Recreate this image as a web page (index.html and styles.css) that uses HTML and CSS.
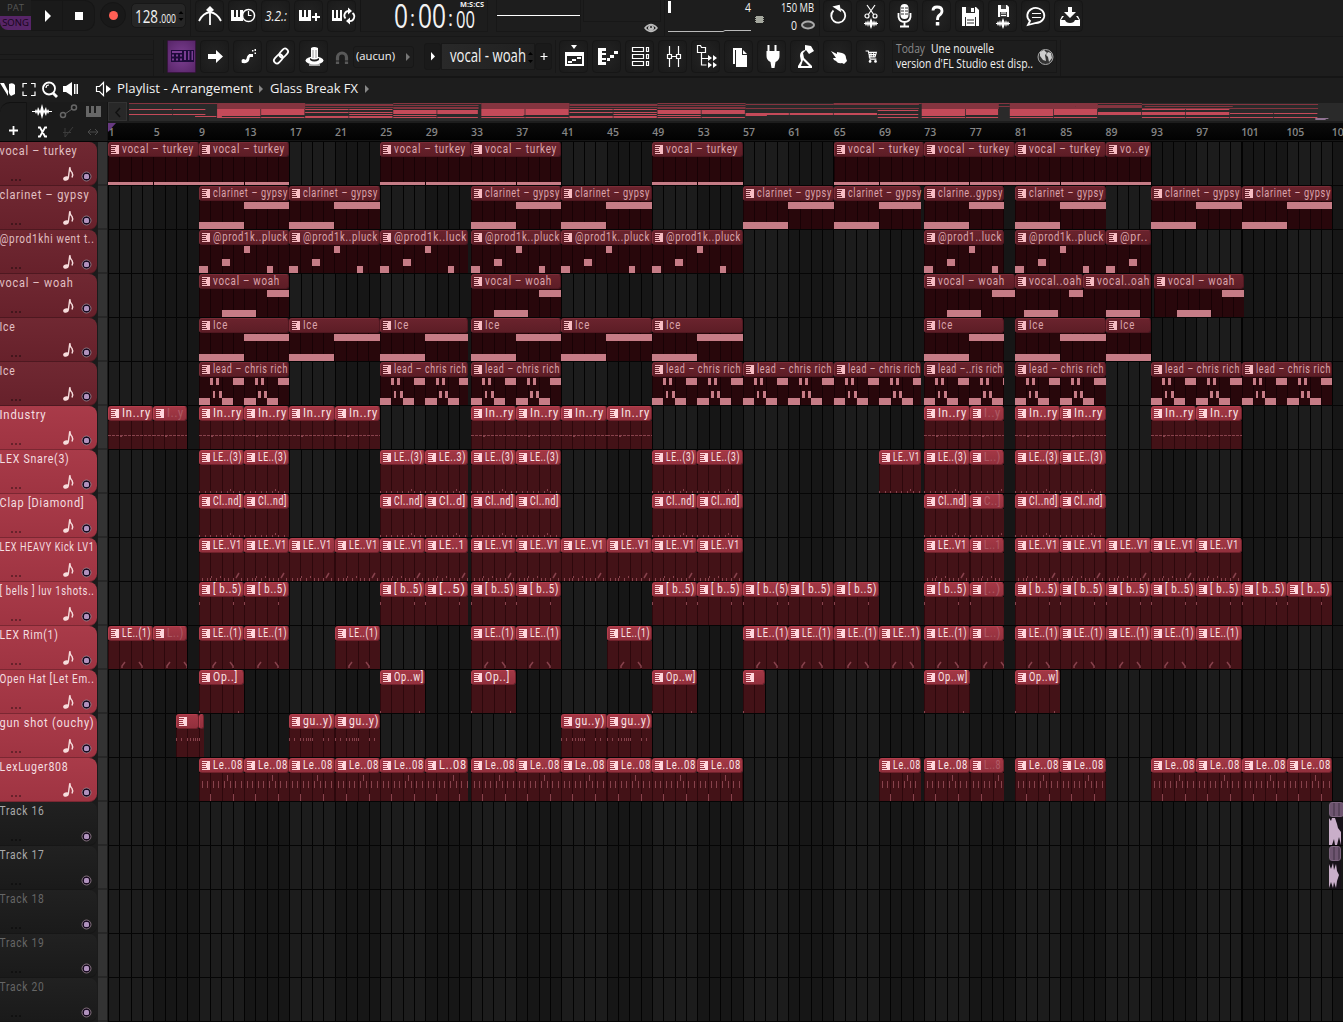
FILE: index.html
```html
<!DOCTYPE html>
<html lang="fr">
<head>
<meta charset="utf-8">
<title>FL Studio - Playlist</title>
<link rel="stylesheet" href="styles.css">
</head>
<body>
<div class="app">
  <header class="bar bar-main">
    <div class="mode"><span>PAT</span><span class="on">SONG</span></div>
    <div class="cell play"><svg width="8" height="12"><path d="M1 0L7 6L1 12z"/></svg></div>
    <div class="cell stop"><i></i></div>
    <div class="rec"><i></i></div>
    <div class="tempo"><svg width="54" height="24"><text x="3" y="18.500" class="num" font-size="18" textLength="23" lengthAdjust="spacingAndGlyphs">128</text><text x="27" y="18.500" class="num" font-size="13.500" textLength="17" lengthAdjust="spacingAndGlyphs">.000</text><path d="M46.500 10l2.500-3l2.500 3zM46.500 14l2.500 3l2.500-3z" fill="#000"/></svg></div>
    <div class="group g1">
      <div class="btn"><svg width="28" height="28"><path d="M3 20Q7 12 14 11Q21 12 25 20" class="ln w2"/><path d="M14 9V24" class="ln w2"/><path d="M10 9l4-4l4 4l-4 3z"/></svg></div>
      <div class="btn"><svg width="28" height="28"><path d="M2 9h3v7h2V9h2v7h2V9h3v11H2z"/><circle cx="19.500" cy="14.500" r="6" class="dial"/><path d="M19.500 10v4.500h3" class="ln"/></svg></div>
      <div class="btn"><svg width="28" height="28"><text x="3" y="19.500" class="num" font-style="italic" font-size="14" textLength="22" lengthAdjust="spacingAndGlyphs">3.2.:</text></svg></div>
      <div class="btn"><svg width="28" height="28"><path d="M4 9h3v7h2V9h2v7h2V9h3v11H4zM20 12h2v3h3v2h-3v3h-2v-3h-3v-2h3z"/></svg></div>
      <div class="btn"><svg width="28" height="28"><path d="M4 9h2v8h2V9h2v8h2V9h2v11H4z"/><path d="M17.500 17.500a4.500 4.500 0 0 1 3.500-7.500M24.500 12a4.500 4.500 0 0 1-3.500 8" class="ln w2"/><path d="M20 6.500l4 3.500l-4 3.500zM22 16.500l-4 3.500l4 3.500z"/></svg></div>
    </div>
    <div class="clock"><svg width="127" height="31"><text x="33" y="27.500" class="num" font-size="32" textLength="14" lengthAdjust="spacingAndGlyphs">0</text><text x="49" y="26" class="num" font-size="22" textLength="5" lengthAdjust="spacingAndGlyphs">:</text><text x="57" y="27.500" class="num" font-size="32" textLength="28" lengthAdjust="spacingAndGlyphs">00</text><text x="87" y="26" class="num" font-size="22" textLength="5" lengthAdjust="spacingAndGlyphs">:</text><text x="95" y="27.500" class="num" font-size="23" textLength="19" lengthAdjust="spacingAndGlyphs">00</text><text x="99" y="7" class="num" font-weight="bold" font-size="7.500" textLength="24" lengthAdjust="spacingAndGlyphs">M:S:CS</text></svg></div>
    <div class="scope"><i></i></div>
    <div class="hint"><svg width="14" height="12"><path d="M1 6Q7-1 13 6Q7 13 1 6z" fill="none" stroke="#bbb" stroke-width="1.500"/><circle cx="7" cy="6" r="3" fill="#bbb"/><circle cx="7" cy="5" r="1" fill="#222"/></svg></div>
    <div class="mon"><svg width="152" height="32"><path d="M3 1h3v12H3z"/><path d="M3 31.500h55l2-1h26" stroke="#bbb" fill="none"/><text x="80" y="12" class="num" font-size="12" textLength="6" lengthAdjust="spacingAndGlyphs">4</text><path d="M91 16h7v7h-7zM90 17h9v1h-9zM90 19h9v1h-9zM90 21h9v1h-9z" fill="#a5a89e"/><text x="116" y="12" class="num" font-size="12" textLength="33" lengthAdjust="spacingAndGlyphs">150 MB</text><text x="126" y="29.500" class="num" font-size="13" textLength="6" lengthAdjust="spacingAndGlyphs">0</text><ellipse cx="143" cy="25" rx="6" ry="3.500" fill="#333" stroke="#aaa" stroke-width="2"/></svg></div>
    <div class="group g2">
      <div class="btn"><svg width="28" height="28"><path d="M9.500 9.500a7 7 0 1 0 7-1.500" class="ln w2"/><path d="M9 4.500h7.500v7.500z" transform="rotate(-12 13 8)"/></svg></div>
      <div class="btn"><svg width="28" height="28"><path d="M10 4l7 10M18 4l-7 10" class="ln"/><circle cx="10" cy="15" r="2" class="ln"/><circle cx="18" cy="15" r="2" class="ln"/><path d="M7 22h1l1-2l1 2l1-3l1 3l2-5l2 5l1-3l1 3l1-2l1 2h1v1h-1l-1 2l-1-2l-1 3l-1-3l-2 5l-2-5l-1 3l-1-3l-1 2l-1-2H7z"/></svg></div>
      <div class="btn"><svg width="28" height="28"><rect x="10.500" y="3" width="8" height="15" rx="4"/><path d="M8.500 12v4q1 5 6 5t6-5v-4M14.500 21v4M10 25.500h9" class="ln w2"/><path d="M11 7h3M11 10h3M11 13h3M15 7h3M15 10h3M15 13h3" stroke="#333"/></svg></div>
      <div class="btn"><svg width="28" height="28"><path d="M10 9.500Q10 6 14 6Q19 6 19 10Q19 12.500 16 14.500Q14.500 15.500 14.500 19" class="ln w3"/><rect x="12.800" y="21" width="3.500" height="3.500"/></svg></div>
      <div class="btn"><svg width="28" height="28"><path d="M6 6h14l3 3v16H6z"/><path d="M10 6h9v6h-9zM9 16h11v9H9z" fill="#2a2a2a"/><path d="M15 7h3v4h-3zM10 16h9v9h-9z"/><path d="M11 19h7M11 22h7" stroke="#2a2a2a"/></svg></div>
      <div class="btn"><svg width="28" height="28"><path d="M9 4h9l2 2v10H9z"/><path d="M12 4h5v4h-5zM11 11h7v5h-7z" fill="#444"/><path d="M12 12h5M12 14.500h5" stroke="#fff"/><path d="M7 22h1l1-2l1 2l1-3l1 3l2-5l2 5l1-3l1 3l1-2l1 2h1v1h-1l-1 2l-1-2l-1 3l-1-3l-2 5l-2-5l-1 3l-1-3l-1 2l-1-2H7z"/></svg></div>
      <div class="btn"><svg width="28" height="28"><path d="M8 20A8.500 7.500 0 1 1 14 22L6 24z" class="ln w2"/><path d="M10 12.500h9M10 16.500h9" class="ln"/></svg></div>
      <div class="btn"><svg width="28" height="28"><path d="M13 6h4v5h4l-6 6l-6-6h4z"/><path d="M9 15l-3 4h4q1 3 5 3t5-3h4l-3-4h2l2 4v6H5v-6l2-4z"/></svg></div>
    </div>
  </header>

  <header class="bar bar-tools">
    <div class="slider"></div>
    <div class="group g3">
      <div class="btn violet"><svg width="28" height="30"><path d="M3 9h23v12H3z" fill="#1d0a3a"/><path d="M4 10h10v2H4zM4 13.500h2v2H4zM8 13.500h2v2H8zM12 13.500h2v2h-2zM4 17.500h2v2H4zM8 17.500h2v2H8zM12 17.500h2v2h-2zM16 10h2v9h-2zM20 10h1.500v9H20zM23.500 10h1.500v9h-1.500z" fill="#7a3d92"/></svg></div>
      <div class="btn"><svg width="28" height="30"><path d="M7 13h8V9l7 6.500l-7 6.500v-4H7z"/></svg></div>
      <div class="btn"><svg width="28" height="30"><path d="M8 20.500q5 1 6-2.500q0-4 4-3.500" class="ln w3"/><circle cx="9.500" cy="20" r="2"/><path d="M15 13h4v3h-4zM18 9h1.500v1.500H18zM20.500 8H22v2h-1.500zM20.500 11.500H22V13h-1.500z"/></svg></div>
      <div class="btn"><svg width="28" height="30"><g transform="rotate(-48 14 15)" class="ln w2"><rect x="5" y="12" width="10" height="6" rx="3"/><rect x="13" y="12" width="10" height="6" rx="3"/></g></svg></div>
      <div class="btn"><svg width="28" height="30"><ellipse cx="14.500" cy="19.500" rx="9" ry="4"/><path d="M11 18V7q3-2 7 0v11z"/><path d="M10 17q4 3 9 0v2q-5 3-9 0z" fill="#222"/><path d="M13 9v8M16 9v8" stroke="#999"/><path d="M9 24h11" class="ln"/></svg></div>
    </div>
    <div class="snap"><svg width="16" height="16"><path d="M2.500 14V7.500a4.500 4.500 0 0 1 9 0V14" fill="none" stroke="#595959" stroke-width="3.200"/><path d="M0 11h14" stroke="#1d1d1d"/></svg></div>
    <div class="select"><svg width="60" height="20"><text x="2" y="12.500" class="num" font-size="11.500" font-weight="500" textLength="39" lengthAdjust="spacingAndGlyphs">(aucun)</text><path d="M52 6l4 4l-4 4z" fill="#777"/></svg></div>
    <div class="small-btn"><svg width="15" height="24"><path d="M6 8l4 4.500l-4 4z"/></svg></div>
    <div class="pattern"><svg width="94" height="26"><text x="8" y="18" class="num" font-size="17.500" textLength="76" lengthAdjust="spacingAndGlyphs">vocal - woah</text><path d="M86 11l2.500-3l2.500 3zM86 16l2.500 3l2.500-3z" fill="#000"/></svg></div>
    <div class="small-btn plus"><svg width="15" height="24"><path d="M4.500 12.500h7M8 9v7" class="ln"/></svg></div>
    <div class="group g4">
      <div class="btn"><svg width="28" height="30"><path d="M11 4h6l-3 4zM5 11h19v14H5z"/><path d="M7 15h15v8H7z" fill="#222"/><path d="M8 20h4v2H8zM12 18h4v2h-4zM17 16h4v2h-4z"/></svg></div>
      <div class="btn"><svg width="28" height="30"><path d="M5 7h8v3H9v2h4v2H9v3h4v2H9v2h4v3H5zM14 17h3v3h-3zM17 14h4v3h-4zM21 10h4v3h-4z"/></svg></div>
      <div class="btn"><svg width="28" height="30"><path d="M6.500 6.500h11v4h-11zM6.500 13.500h11v4h-11zM6.500 20.500h11v4h-11zM20.500 6.500h2v4h-2zM20.500 13.500h2v4h-2zM20.500 20.500h2v4h-2z" class="ln"/></svg></div>
      <div class="btn"><svg width="28" height="30"><path d="M10.500 5v8M19.500 5v8M10.500 18v8M19.500 18v8M8.500 13.500h4v4h-4zM17.500 13.500h4v4h-4zM12 15.500h6" class="ln"/></svg></div>
      <div class="btn"><svg width="28" height="30"><path d="M5.500 4.500h3l1 2h4v5h-8zM9.500 12v12h5M10 17.500h6" class="ln"/><path d="M16 14l4 3l-4 3zM21 14l4 3l-4 3zM16 21l4 3l-4 3zM21 21l4 3l-4 3z"/></svg></div>
      <div class="btn"><svg width="28" height="30"><path d="M8 7h9v2h-7v14H8z"/><path d="M11 9h6v5h5v12H11zM18 9l4 4h-4z"/></svg></div>
      <div class="btn"><svg width="28" height="30"><path d="M9.500 4h2v6h5V4h2v6h3v5q0 4-4 6l-1 6h-3l-1-6q-4-2-4-6v-5h1z"/></svg></div>
      <div class="btn"><svg width="28" height="30"><path d="M14 4l6 1l3 5l-5 3l-3-4l-3 3l1 5l8 8v2H7v-2l3-5l-1-5q0-5 5-6z"/><path d="M12 19l-2 6h8z" fill="#242424"/></svg></div>
      <div class="btn"><svg width="28" height="30"><path d="M7 10l6 3v-2l5 1q4 1 4 5l1 3l-3 3l-2-1q-4 1-6-2l-2-1l-1-2h3z"/></svg></div>
      <div class="btn cart"><svg width="28" height="30"><path d="M8 9.500h3l2 9h7M11 11h9l-1.500 5h-7M14 11v5M17 11v5M12 13.500h7" class="ln"/><circle cx="13" cy="21" r="1.500"/><circle cx="19" cy="21" r="1.500"/></svg></div>
    </div>
    <div class="news"><svg width="164" height="31"><text x="3" y="11.500" class="num dim" font-size="12" textLength="29" lengthAdjust="spacingAndGlyphs">Today</text><text x="38" y="11.500" class="num" font-size="12" textLength="63" lengthAdjust="spacingAndGlyphs">Une nouvelle</text><text x="3" y="26.500" class="num" font-size="12" textLength="137" lengthAdjust="spacingAndGlyphs">version d'FL Studio est disp..</text><circle cx="152.500" cy="16" r="7.500" fill="#333" stroke="#aaa"/><path d="M147 11l4-2l3 3l-2 2l1 6l-3-1l-3-4zM155 11l3 1l1 5l-3 4l-1-5l-2-2z" fill="#ccc"/></svg></div>
    <div class="rest"></div>
  </header>

  <header class="titlebar">
    <svg width="112" height="22"><path d="M0 5h4l4 8v5zM9 6q4-2 6 1v9l-4 2q-3-3-2-6z"/><path d="M27 5.500h-4v4M31 5.500h4v4M35 13.500v4h-4M23 13.500v4h4" class="ln"/><circle cx="49" cy="10.500" r="6" class="ln w2"/><path d="M46 10q0-3 3-3" class="ln"/><path d="M53 15l4 4" class="ln w3"/><path d="M63 8h3l6-4v14l-6-4h-3zM74 6h1.500v10H74zM76.500 6H78v10h-1.500z"/><path d="M96.500 8.500h3l4-4v13l-4-4h-3z" class="ln"/><path d="M106 7l5 4l-5 4z"/></svg>
    <svg class="crumbs" width="260" height="22"><text x="5" y="15" class="num title" textLength="136" lengthAdjust="spacingAndGlyphs">Playlist - Arrangement</text><path d="M147 7l4 4l-4 4z" fill="#888"/><text x="158" y="15" class="num title" textLength="88" lengthAdjust="spacingAndGlyphs">Glass Break FX</text><path d="M253 7l4 4l-4 4z" fill="#888"/></svg>
  </header>

  <section class="head">
    <div class="add"><svg width="26" height="38"><path d="M9 27.500h9M13.500 23v9" class="ln w2"/></svg></div>
    <div class="modes"><svg width="80" height="38"><path d="M5 9h3l1-2l1 2l1-4l2 4l2-7l2 7l2-4l1 4l1-2l1 2h3v1h-3l-1 2l-1-2l-1 4l-2-4l-2 7l-2-7l-2 4l-1-4l-1 2l-1-2H5z"/><path d="M38 12l7-5" stroke="#666"/><circle cx="36" cy="13" r="2.500" fill="none" stroke="#666" stroke-width="1.500"/><circle cx="47" cy="5.500" r="2.500" fill="none" stroke="#666" stroke-width="1.500"/><path d="M59 4h3v7h2V4h3v7h2V4h5v11H59z" fill="#666"/><path d="M11 25.500h2l5 9h2M11 34.500h2l5-9h2" class="ln w2"/><path d="M38 26v9l8-10M36 30.500h8" stroke="#3c3c3c" fill="none"/><path d="M61 30h10M64 27l-3 3l3 3M68 27l3 3l-3 3" stroke="#4b4b4b" fill="none"/></svg></div>
    <div class="nav">
      <div class="overview"><div class="back"><svg width="18" height="18"><path d="M11 5l-4 4.500l4 4.500" fill="none" stroke="#111" stroke-width="1.500"/></svg></div><svg id="map" width="1216" height="18"></svg></div>
      <div class="ruler" id="ruler"></div>
    </div>
  </section>
  <main class="playlist" id="playlist"></main>
</div>
<script src="playlist.js"></script>
</body>
</html>
```
FILE: styles.css
```css
* { box-sizing: border-box; }
body { margin: 0; background: #1d1d1d; font-family: "Open Sans", "Noto Sans", sans-serif; overflow: hidden; }
svg { display: block; fill: #fff; flex: none; overflow: visible; }
.num { font-family: "Open Sans", "Noto Sans", sans-serif; fill: #f2f2f2; }
.dim { fill: #8b8b8b; }
.title { font-size: 13px; font-weight: 500; }
.ln { fill: none; stroke: #fff; stroke-width: 1.2; }
.w2 { stroke-width: 1.8; }
.w3 { stroke-width: 2.8; }
.dial { fill: #1b1b1b; stroke: #fff; stroke-width: 1.5; }
.app { width: 1343px; height: 1022px; overflow: hidden; display: flex; flex-direction: column; }

.bar { display: flex; background: #1d1d1d; flex: none; }
.bar-main { height: 37px; border-bottom: 1px solid #171717; }
.bar-tools { height: 41px; padding-top: 3px; border-bottom: 2px solid #151515; }
.btn { width: 29px; height: 32px; background: radial-gradient(#242424, #1a1a1a); border: 1px solid #161616; border-radius: 4px; display: flex; align-items: center; justify-content: center; }
.bar-main .btn { padding-bottom: 2px; }
.bar-tools .btn { height: 33px; padding-bottom: 1px; }
.cart svg { transform: scale(.9); }
.violet { background: radial-gradient(#7d3f92, #572568); border-color: #38153f; border-radius: 1px; }
.group { display: flex; gap: 4px; height: 33px; }

.mode { width: 31px; height: 32px; display: flex; flex-direction: column; font-size: 9.5px; text-align: center; color: #555; line-height: 16px; }
.mode .on { height: 14px; line-height: 13px; background: #572568; color: #160619; border-radius: 0 0 0 8px; }
.cell { width: 32px; height: 31px; border: 1px solid #161616; border-left: 0; background: #1a1a1a; display: flex; align-items: center; justify-content: center; }
.play { padding-left: 2px; }
.stop { border-radius: 0 10px 10px 0; }
.stop i { width: 8px; height: 8px; background: #fff; }
.rec { width: 26px; height: 26px; margin: 2px 0 0 5px; border-radius: 50%; background: #191919; border: 1px solid #151515; display: flex; align-items: center; justify-content: center; }
.rec i { width: 9px; height: 9px; border-radius: 50%; background: #ff5f55; }
.tempo { width: 55px; height: 25px; margin: 3px 0 0 5px; background: #262626; border: 1px solid #171717; border-radius: 5px; }
.g1 { margin-left: 4px; padding-left: 4px; border-left: 1px solid #171717; width: 170px; height: 36px; }
.clock { width: 128px; height: 32px; border: 1px solid #181818; border-top: 0; border-left-color: #151515; }
.scope { width: 85px; height: 32px; margin-left: 8px; border: 1px solid #171717; border-top: 0; padding-top: 15px; }
.scope i { display: block; height: 1px; background: #fff; }
.hint { width: 78px; height: 22px; margin-left: 2px; border: 1px solid #171717; border-top: 0; display: flex; }
.hint svg { margin: 22px 0 0 60px; }
.mon { width: 156px; margin-left: 3px; border-left: 1px solid #171717; height: 36px; border-right: 1px solid #171717; }
.g2 { margin-left: 3px; }

.slider { width: 154px; height: 36px; border-right: 1px solid #171717; background: linear-gradient(#161616, #161616) 0 14px / 100% 1px no-repeat, linear-gradient(#161616, #161616) 0 19px / 100% 1px no-repeat; }
.g3 { margin-left: 9px; padding-left: 3px; border-left: 1px solid #171717; width: 167px; }
.snap { margin: 10px 0 0 5px; width: 16px; }
.select { width: 61px; height: 22px; margin: 6px 0 0 2px; border: 1px solid #171717; border-radius: 3px; }
.small-btn { width: 17px; height: 27px; margin: 3px 0 0 10px; border: 1px solid #171717; border-radius: 3px; background: #1a1a1a; }
.plus { margin-left: 0; }
.pattern { width: 94px; height: 27px; margin-top: 3px; background: linear-gradient(90deg, #292929, #202020); border: 1px solid #181818; }
.g4 { margin-left: 3px; padding-left: 3px; border-left: 1px solid #171717; }
.news { width: 165px; height: 33px; margin-left: 7px; border: 1px solid #171717; }
.rest { margin-left: 3px; border-left: 1px solid #171717; }
.titlebar { height: 24px; display: flex; flex: none; }

.head { height: 39px; display: flex; flex: none; }
.add { width: 27px; border-top: 1px solid #111; border-radius: 10px 0 0 0; border-right: 1px solid #131313; background: #1c1c1c; }
.modes { width: 81px; background: #1b1b1b; border-right: 1px solid #131313; }
.nav { flex: 1; min-width: 0; }
.overview { height: 21px; display: flex; gap: 2px; background: #1d1d1d; }
.back { width: 19px; height: 19px; background: #282828; border: 1px solid #333; }
#map { margin-top: 1px; background: #2a2a2a; }
.ruler { height: 18px; background: linear-gradient(#0b0b0b, #020202); display: grid; grid-template-columns: repeat(30, 45.34px); font-size: 10.5px; font-weight: 600; line-height: 19px; color: #858585; position: relative; border-bottom: 1px solid #151515; }
.ruler span { width: 45px; padding-left: .4px; white-space: nowrap; }
.ruler .m3 { padding-left: 0; letter-spacing: -.2px; }
.marker { position: absolute; left: 0; top: 0; width: 8px; height: 9px; background: #673980; clip-path: polygon(0 0, 100% 0, 0 100%); }

.playlist { flex: 1; background: #050505; padding-top: 1px; }
.track { height: 44px; display: flex; }
.name { width: 97px; height: 44px; border-radius: 0 8px 8px 0; flex: none; background: linear-gradient(#702832, #67212b); border-bottom: 1px solid #4e1820; }
.vivid .name { background: linear-gradient(#a93b49, #9f3442); border-bottom-color: #7b2732; }
.empty .name { background: linear-gradient(#212121, #1a1a1a); border-bottom-color: #161616; }
.side { width: 108px; display: flex; background: #1b1b1b; flex: none; }
.side i { width: 9px; margin-left: 1px; background: #333; border-bottom: 2px solid #272727; }
.name text { font: 12.5px Roboto, "Open Sans", sans-serif; letter-spacing: .9px; fill: #e2c0c4; }
.vivid .name text { fill: #f5dfe1; }
.empty .name text { fill: #aaa; }
.off .name text { fill: #666; }
.name .dots { fill: #000; opacity: .35; }
.name .note { fill: #f6dcdc; }
.name .stem { fill: none; stroke: #f6dcdc; stroke-width: 1.4; }
.empty .note, .empty .stem { display: none; }

.lane { flex: none; width: 1235px; height: 43px; display: grid; grid-template-columns: repeat(55, 2.8282px 2.8282px 2.8282px 2.8438px 2.8282px 2.8438px 2.8282px 2.8438px); grid-template-rows: 43px; overflow: hidden;
  background: repeating-linear-gradient(90deg, #030303 0 1px, transparent 1px 11.335px), repeating-linear-gradient(90deg, #1c1c1c 0 45.34px, #161616 45.34px 90.68px); }
.clip { height: 43px; grid-row: 1; display: flex; flex-direction: column; min-width: 0; }
.cap { height: 15px; flex: none; background: linear-gradient(#6a232d, #5d1d26); border: 1px solid #75303a; border-color: #7b2c37 #501720 #501720 #7b2c37; border-radius: 3px; }
.cap svg { width: 100%; }
.cap text { font: 12px Roboto, "Open Sans", sans-serif; letter-spacing: .9px; fill: #dba5ac; }
.cap .ic { fill: #f7bcc3; }
.clip .body { width: 100%; overflow: hidden; background: repeating-linear-gradient(90deg, #180205 0 1px, #28070b 1px 11.335px); fill: #c67c86; }
.vivid .cap { background: linear-gradient(#a33845, #92303d); border-color: #b33d4c #70212b #70212b #b33d4c; }
.vivid .cap text { fill: #fae6e8; }
.vivid .cap .ic { fill: #ffd6dc; }
.vivid .body { background: repeating-linear-gradient(90deg, #2d080c 0 1px, #431217 1px 11.335px); fill: #87424c; }
.body .slash { stroke: #87424c; stroke-width: 1.5; fill: none; }
.faded .cap text { opacity: .22; }
.empty .audio .cap { background: repeating-linear-gradient(90deg, #6e5570 0 3px, #57435a 3px 5px); border-color: #7c647e; }
.empty .audio .body { background: #171118; fill: #c9aec9; }
```
FILE: playlist.js
```js
const BAR = 11.335;
// Vertical slots of the note preview, in pixels from the top of a clip.
const HI = [16, 7], MID = [29, 7], LOW = [36, 7];
const block = (a, b, slot) => [a * BAR, slot[0], (b - a) * BAR, slot[1]];
const tick = (x, y, h) => [x, y, 1, h];

const halves = [block(0, 4, LOW), block(4, 8, HI)];
const lead = [];
for (const o of [0, 4]) {
  lead.push(block(o, o + 1, LOW), block(o + 2, o + 3, LOW), block(o + 3, o + 4, HI));
  lead.push(block(o + .95, o + 1.2, HI), block(o + 1.5, o + 1.75, HI));
  lead.push(block(o + 1.2, o + 1.45, MID), block(o + 1.75, o + 2, MID));
}
const dashes = [];
for (let x = 0; x < 45; x += 4) dashes.push([x, 29, 3, 1]);
dashes.push([12, 30, 2, 1]);
const snare = [0, 6, 11, 17, 22, 28, 34, 40].map(x => tick(x, 41, 2)).concat([tick(31, 39, 2)]);
const kick = [3, 8, 11, 17, 25, 29, 34, 42].map(x => tick(x, 40, 3)).concat([tick(12, 38, 2), tick(21, 38, 2)]);
const bass = [3, 8, 14, 19, 25, 31, 36, 42].map(x => tick(x, 23, 7)).concat([tick(28, 17, 6), tick(11, 36, 7), tick(34, 36, 7)]);

const run = (starts, label, w, len = 4) => starts.map(s => [s, len, label, w]);
const F = 'faded';
const tracks = [
  { n: 'vocal – turkey', w: 78, notes: [[0, 40, 45, 3], [46, 40, 45, 3]], clips: [...run([1, 9, 25, 33, 49, 65, 73, 81], 'vocal – turkey', 72, 8), [89, 4, 'vo..ey', 30]] },
  { n: 'clarinet – gypsy', w: 90, notes: halves, clips: [...run([9, 17, 33, 41, 57], 'clarinet – gypsy', 75, 8), [65, 7.75, 'clarinet – gypsy', 74], [73, 7, 'clarine..gypsy', 65], ...run([81, 93, 101], 'clarinet – gypsy', 75, 8)] },
  { n: '@prod1khi went t..', w: 95, notes: [block(0, .75, LOW), block(2, 2.75, MID), block(4, 4.5, HI), block(6, 6.5, LOW)], clips: [...run([9, 17, 33, 41, 49, 81], '@prod1k..pluck', 75, 8), [25, 7.75, '@prod1k..luck', 73], [73, 7, '@prod1..luck', 64], [89, 4, '@pr..', 28]] },
  { n: 'vocal – woah', w: 74, notes: [block(2, 5, LOW), block(6, 8, HI)], clips: [...run([9, 33, 73, 93.25], 'vocal – woah', 67, 8), [81, 6, 'vocal..oah', 53, '', -1.2], [87, 6, 'vocal..oah', 53]] },
  { n: 'Ice', w: 16, notes: halves, clips: [...run([9, 17, 33, 41, 49, 81], 'Ice', 15, 8), [25, 7.75, 'Ice', 15], [73, 7, 'Ice', 15], [89, 4, 'Ice', 15]] },
  { n: 'Ice', w: 16, notes: lead, clips: [...run([9, 33, 49, 57, 81, 93, 101], 'lead – chris rich', 75, 8), ...run([25, 65], 'lead – chris rich', 73, 7.75), [73, 7, 'lead –..ris rich', 65]] },
  { n: 'Industry', w: 47, v: 1, notes: dashes, clips: [...run([1, 9, 13, 17, 21, 33, 37, 41, 45, 73, 81, 85, 93, 97], 'In..ry', 29), [5, 3, 'I..y', 17, F], [77, 3, 'I..y', 17, F]] },
  { n: 'LEX Snare(3)', w: 70, v: 1, notes: snare, clips: [...run([9, 13, 25, 33, 37, 49, 53, 73, 81, 85], 'LE..(3)', 29), [29, 3.75, 'LE..3)', 27], [69, 3.75, 'LE..V1', 27], [77, 3, 'L..)', 17, F]] },
  { n: 'Clap [Diamond]', w: 85, v: 1, notes: snare, clips: [...run([9, 13, 25, 33, 37, 49, 53, 73, 81, 85], 'Cl..nd]', 29), [29, 3.75, 'Cl..d]', 27], [77, 3, 'C..]', 17, F]] },
  { n: 'LEX HEAVY Kick LV1', w: 95, v: 1, notes: kick, slash: ['M37 40l3-5'], clips: [...run([9, 13, 17, 21, 25, 33, 37, 41, 45, 49, 53, 73, 81, 85, 89, 93, 97], 'LE..V1', 29), [29, 3.75, 'LE..1', 26], [77, 3, 'L..1', 17, F]] },
  { n: '[ bells ] luv 1shots..', w: 95, v: 1, notes: [tick(0, 20, 3), tick(34, 20, 3)], clips: [...run([9, 13, 25, 33, 37, 49, 53, 61, 65, 73, 81, 85, 89, 93, 97, 101, 105], '[ b..5)', 29), [29, 3.75, '[..5)', 27], [57, 4, '[ b..(5)', 32], [77, 3, '[..)', 17, F]] },
  { n: 'LEX Rim(1)', w: 59, v: 1, notes: [], slash: ['M14 42v-2l3-4', 'M31 36l3 4v2'], clips: [...run([1, 9, 13, 21, 33, 37, 45, 61, 65, 73, 81, 85, 89, 93, 97], 'LE..(1)', 29), [57, 4, 'LE..(1)', 32], [69, 3.75, 'LE..1)', 27], ...[5, 77].map(s => [s, 3, 'L..)', 17, F])] },
  { n: 'Open Hat [Let Em..', w: 95, v: 1, notes: [tick(0, 41, 2), tick(39, 41, 2)], clips: [[9, 4, 'Op..]', 25], [33, 3.9, 'Op..]', 25], ...run([25, 49, 73, 81], 'Op..w]', 30), [57, 2, '', 0]] },
  { n: 'gun shot (ouchy)', w: 95, v: 1, notes: [0, 5, 11, 14, 17, 19, 21, 23, 34, 39].map(x => tick(x, 24, 3)), clips: [[7, 2, '', 0], [9, .5, '', 0], ...run([17, 21, 41, 45], 'gu..y)', 30)] },
  { n: 'LexLuger808', w: 69, v: 1, notes: bass, clips: [...run([9, 13, 17, 21, 25, 33, 37, 41, 45, 49, 53, 73, 81, 85, 93, 97, 101, 105], 'Le..08', 30), ...run([29], 'L..08', 28, 3.75), ...run([69], 'Le..08', 28, 3.75), [77, 3, 'L..8', 17, F]] },
  { n: 'Track 16', w: 45, empty: 1, notes: [], shape: 'M0 16l2 3l1-3h3l2 6l1 4l3 4v13l-2-8l-2 8h-2l-1-6l-2 6H0z', clips: [[108.75, 1.25, '', 0, 'audio']] },
  { n: 'Track 17', w: 45, empty: 1, notes: [], shape: 'M0 18l2 5l2-6l1 7l2-6l1 7l2 4l-2 6l-1 7l-2-6l-1 6l-2-6l-2 6z', clips: [[108.75, 1, '', 0, 'audio']] },
  { n: 'Track 18', w: 45, empty: 1, off: 1, notes: [], clips: [] },
  { n: 'Track 19', w: 45, empty: 1, off: 1, notes: [], clips: [] },
  { n: 'Track 20', w: 45, empty: 1, off: 1, notes: [], clips: [] }
];

const text = (x, y, w, s) => s ? `<text x="${x}" y="${y}" textLength="${w}" lengthAdjust="spacingAndGlyphs">${s}</text>` : '';

function clipHtml(track, [start, len, label, w, kind = '', shift = 0]) {
  const from = Math.round((start - 1) * 4) + 1;
  const span = Math.max(2, Math.round(len * 4));
  const notes = track.notes.map(([x, y, nw, h]) => `<rect x="${x + shift * BAR}" y="${y - 15}" width="${nw}" height="${h}"/>`).join('');
  const paths = (track.slash || []).map(d => `<path class="slash" d="${d}" transform="translate(0 -15)"/>`).join('')
    + (track.shape ? `<path d="${track.shape}" transform="translate(0 -15)"/>` : '');
  const icon = len < 1 || kind === 'audio' ? '' : '<path class="ic" shape-rendering="crispEdges" d="M2 2h8v9H2v-1h5V9H2V8h4V7H2V6h4V5H2V4h5V3H2z"/>';
  return `<div class="clip ${kind}" style="grid-column:${from} / span ${span}"><div class="cap"><svg height="13">${icon}${text(13, 10, w, label)}</svg></div><svg class="body" height="28" shape-rendering="${paths ? 'auto' : 'crispEdges'}">${notes}${paths}</svg></div>`;
}

document.getElementById('playlist').innerHTML = tracks.map(t => `
  <div class="track ${t.v ? 'vivid' : ''} ${t.empty ? 'empty' : ''} ${t.off ? 'off' : ''}">
    <div class="side"><div class="name"><svg width="97" height="43">${text(-.5, 13, t.w, t.n)}
      <path class="dots" d="M11 37h2v2h-2zM15 37h2v2h-2zM19 37h2v2h-2z"/>
      <ellipse class="note" cx="66" cy="36.500" rx="2.900" ry="2.100" transform="rotate(-20 66 36.500)"/>
      <path class="stem" d="M68.300 36L69.800 25Q70 29 72 30.500Q73.300 32.500 72 35.500"/>
      <circle cx="86.500" cy="34.500" r="4.500" fill="#180b20" stroke="#a28d98" stroke-opacity=".75"/><rect x="84" y="32" width="5" height="5" rx="1.500" fill="#b092bd"/></svg></div><i></i></div>
    <div class="lane">${t.clips.slice().sort((a, b) => a[0] - b[0]).map(c => clipHtml(t, c)).join('')}</div>
  </div>`).join('');

let ruler = '<i class="marker"></i>';
for (let b = 1; b <= 109; b += 4) ruler += `<span class="${b > 99 ? 'm3' : ''}">${b}</span>`;
document.getElementById('ruler').innerHTML = ruler;

document.getElementById('map').innerHTML = tracks.map((t, i) => t.clips.map(c =>
  `<rect x="${(c[0] - 1) * 11.01}" y="${i}" width="${c[1] * 11.01 - (i > 5 ? .7 : 0)}" height="1" fill="${t.empty ? '#8f7291' : t.v ? '#c54a59' : '#84343f'}"/>`).join('')).join('');
```
